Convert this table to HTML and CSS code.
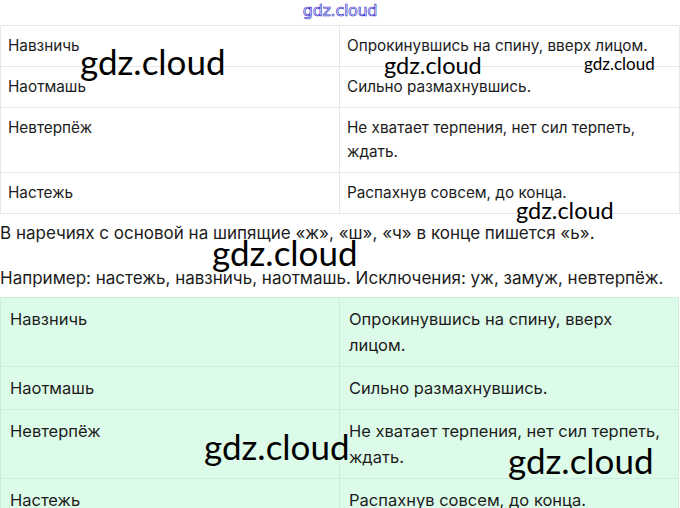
FILE: index.html
```html
<!DOCTYPE html>
<html lang="ru">
<head>
<meta charset="utf-8">
<link rel="stylesheet" href="styles.css">
</head>
<body>
<div class="page">
  <header class="site"><span class="logo">gdz.cloud</span></header>
  <div class="table t1">
    <div class="cell">Навзничь</div><div class="cell">Опрокинувшись на спину, вверх лицом.</div>
    <div class="cell">Наотмашь</div><div class="cell">Сильно размахнувшись.</div>
    <div class="cell">Невтерпёж</div><div class="cell">Не хватает терпения, нет сил терпеть, ждать.</div>
    <div class="cell">Настежь</div><div class="cell">Распахнув совсем, до конца.</div>
  </div>
  <p class="note n1">В наречиях с основой на шипящие «ж», «ш», «ч» в конце пишется «ь».</p>
  <p class="note n2">Например: настежь, навзничь, наотмашь. Исключения: уж, замуж, невтерпёж.</p>
  <div class="table t2">
    <div class="cell">Навзничь</div><div class="cell">Опрокинувшись на спину, вверх лицом.</div>
    <div class="cell">Наотмашь</div><div class="cell">Сильно размахнувшись.</div>
    <div class="cell">Невтерпёж</div><div class="cell">Не хватает терпения, нет сил терпеть, ждать.</div>
    <div class="cell">Настежь</div><div class="cell">Распахнув совсем, до конца.</div>
  </div>
  <span class="wm w1">gdz.cloud</span>
  <span class="wm w2">gdz.cloud</span>
  <span class="wm w3">gdz.cloud</span>
  <span class="wm w4">gdz.cloud</span>
  <span class="wm w5">gdz.cloud</span>
  <span class="wm w6">gdz.cloud</span>
  <span class="wm w7">gdz.cloud</span>
</div>
</body>
</html>
```
FILE: styles.css
```css
html, body { margin: 0; padding: 0; background: #fff; }
body { font-family: Inter, "Noto Sans", sans-serif; color: #1c1c1c; }
.page { position: relative; width: 680px; height: 508px; overflow: hidden; }
.site { height: 25px; display: flex; justify-content: center; align-items: center; }
.logo { font-family: "DejaVu Sans", sans-serif; font-size: 16px; color: #fff; -webkit-text-stroke: 0.7px #3a36d0; letter-spacing: -0.3px; position: relative; top: -2px; }
.table { display: grid; grid-template-columns: 339px 1fr; width: 679px; border-top: 1px solid #e4e6ea; border-left: 1px solid #e4e6ea; }
.cell { border-right: 1px solid #e4e6ea; border-bottom: 1px solid #e4e6ea; }
.t1 .cell { font-size: 15.3px; line-height: 24px; padding: 8px 16px 8px 7px; }
.t2 { background: #dcfbe9; border-color: #cdeedc; width: 678px; }
.t2 .cell { font-size: 16.5px; line-height: 26px; padding: 8px 12px 8px 9px; border-color: #cdeedc; }
.note { margin: 0; font-size: 17px; line-height: 24px; white-space: nowrap; }
.n1 { margin-top: 7px; }
.n2 { margin-top: 21px; margin-bottom: 7px; }
.wm { position: absolute; font-family: Lato, sans-serif; color: #000; line-height: 1; white-space: nowrap; }
.w1 { left: 80px; top: 44px; font-size: 35px; }
.w2 { left: 384px; top: 54px; font-size: 23.5px; }
.w3 { left: 584px; top: 55px; font-size: 17px; }
.w4 { left: 516px; top: 199px; font-size: 23.5px; }
.w5 { left: 212px; top: 235px; font-size: 35px; }
.w6 { left: 204px; top: 429px; font-size: 35px; }
.w7 { left: 508px; top: 443px; font-size: 35px; }
```
